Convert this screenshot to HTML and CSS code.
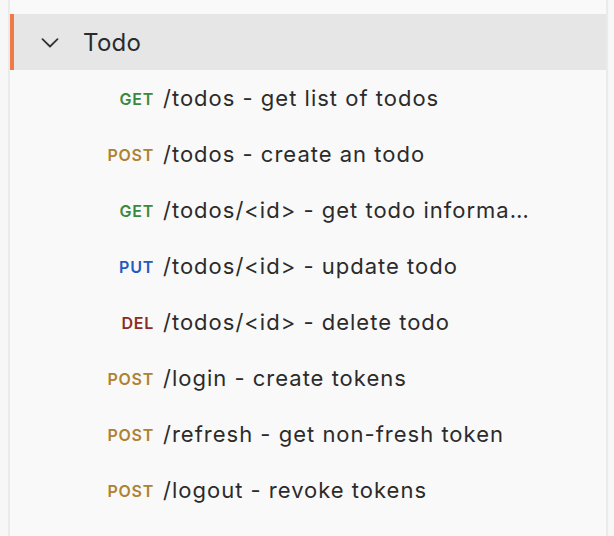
FILE: index.html
```html
<!DOCTYPE html>
<html>
<head>
<meta charset="utf-8">
<link rel="stylesheet" href="styles.css">
</head>
<body>
<div class="panel">
  <div class="group-header">
    <svg class="chevron" width="18" height="10" viewBox="0 0 18 10"><path d="M1.5 1.2 L9 8.5 L16.5 1.2" fill="none" stroke="#333" stroke-width="1.8" stroke-linecap="round" stroke-linejoin="round"/></svg>
    <span class="group-title">Todo</span>
  </div>
  <ul class="requests">
    <li class="req"><span class="method get">GET</span><span class="name">/todos - get list of todos</span></li>
    <li class="req"><span class="method post">POST</span><span class="name">/todos - create an todo</span></li>
    <li class="req"><span class="method get">GET</span><span class="name">/todos/&lt;id&gt; - get todo information</span></li>
    <li class="req"><span class="method put">PUT</span><span class="name">/todos/&lt;id&gt; - update todo</span></li>
    <li class="req"><span class="method del">DEL</span><span class="name">/todos/&lt;id&gt; - delete todo</span></li>
    <li class="req"><span class="method post">POST</span><span class="name">/login - create tokens</span></li>
    <li class="req"><span class="method post">POST</span><span class="name">/refresh - get non-fresh token</span></li>
    <li class="req"><span class="method post">POST</span><span class="name">/logout - revoke tokens</span></li>
  </ul>
</div>
</body>
</html>
```
FILE: styles.css
```css
html, body {
  margin: 0;
  padding: 0;
  background: #f7f7f7;
  font-family: Inter, "Noto Sans", sans-serif;
  color: #2b2b2b;
}
.panel {
  margin-left: 8px;
  width: 596px;
  height: 536px;
  background: #f9f9f9;
  border-left: 2px solid #ebebeb;
  border-right: 2px solid #ebebeb;
  padding-top: 14px;
  box-sizing: content-box;
}
.group-header {
  height: 56px;
  background: #e6e6e6;
  border-left: 4px solid #f07a46;
  display: flex;
  align-items: center;
  box-sizing: border-box;
}
.chevron {
  margin-left: 27px;
  margin-top: 2px;
  display: block;
}
.group-title {
  margin-left: 24px;
  font-size: 24px;
  letter-spacing: 0.3px;
  color: #2b2b2b;
}
.requests {
  list-style: none;
  margin: 0;
  padding: 0;
}
.req {
  height: 56px;
  display: flex;
  align-items: center;
  padding-left: 89px;
}
.method {
  width: 55px;
  text-align: right;
  font-size: 16px;
  font-weight: 600;
  letter-spacing: 0.75px;
  flex: none;
  margin-right: 9px;
  padding-top: 1px;
}
.name {
  font-size: 22px;
  letter-spacing: 1px;
  white-space: nowrap;
  overflow: hidden;
  text-overflow: ellipsis;
  max-width: 368px;
}
.get { color: #3a8a3c; }
.post { color: #ad8230; }
.put { color: #2458c2; }
.del { color: #8e2b22; }
```
